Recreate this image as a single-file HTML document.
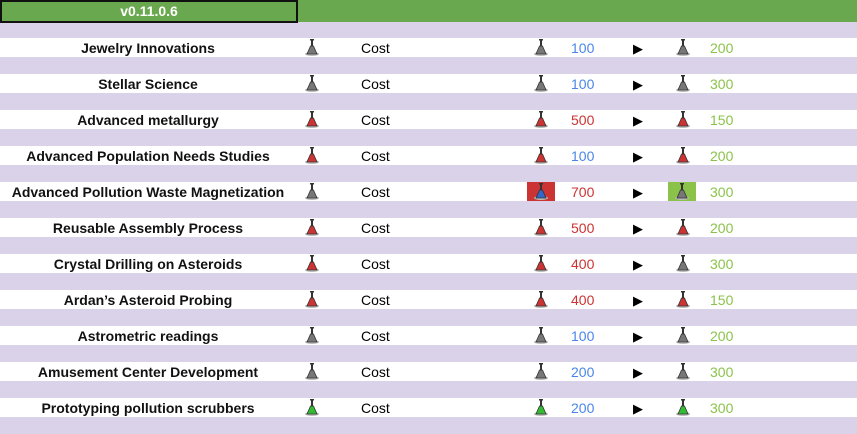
<!DOCTYPE html>
<html><head><style>
body{margin:0;width:857px;height:434px;background:#d9d2e9;font-family:"Liberation Sans",Arial,sans-serif;font-size:14px;position:relative;overflow:hidden}
.hdr{position:absolute;left:0;top:0;width:857px;height:22px;background:#6aa84f}
.ver{position:absolute;left:0;top:0;height:19px;border:2px solid #111;color:#fff;font-weight:bold;text-align:center;line-height:19px;font-size:14px;box-sizing:content-box;width:294px}
.row{position:absolute;left:0;width:857px;height:19px;background:#fff;line-height:21px}
.row span{position:absolute;top:0}
.nm{left:0;width:296px;text-align:center;font-weight:bold;color:#111}
.cost{left:361px}
.n1{left:571px}
.ar{left:633px;font-size:13px}
.n2{left:710px;color:#8bc34a}
.f{position:absolute;top:0;width:18px;height:19px}
.b{color:#4a86e8}.r{color:#cc3333}.g{color:#8bc34a}
</style></head><body>
<div class="hdr"></div><div class="ver">v0.11.0.6</div>
<div id="c"></div>
<script>
var rows=[["Jewelry Innovations","#777","#777","100","b","#777","200",0],
["Stellar Science","#777","#777","100","b","#777","300",0],
["Advanced metallurgy","#c33","#c33","500","r","#c33","150",0],
["Advanced Population Needs Studies","#c33","#c33","100","b","#c33","200",0],
["Advanced Pollution Waste Magnetization","#777","#36c","700","r","#777","300",1],
["Reusable Assembly Process","#c33","#c33","500","r","#c33","200",0],
["Crystal Drilling on Asteroids","#c33","#c33","400","r","#777","300",0],
["Ardan’s Asteroid Probing","#c33","#c33","400","r","#c33","150",0],
["Astrometric readings","#777","#777","100","b","#777","200",0],
["Amusement Center Development","#777","#777","200","b","#777","300",0],
["Prototyping pollution scrubbers","#3b3","#3b3","200","b","#3b3","300",0]];
function fl(x,c,bg){return '<div class="f" style="left:'+x+'px;'+(bg?'background:'+bg+';width:28px;':'')+'"><svg width="'+(bg?28:18)+'" height="19" viewBox="'+(bg?'-5 0 28 19':'0 0 18 19')+'"><ellipse cx="9" cy="16" rx="7" ry="2" fill="#bbb"/><rect x="8" y="2" width="2" height="7" fill="#333"/><path d="M7.5 8 L10.5 8 L14 16 L4 16 Z" fill="'+c+'" stroke="#333" stroke-width="0.8"/><rect x="7" y="1" width="4" height="1.5" fill="#333"/></svg></div>';}
var h='';
rows.forEach(function(r,i){var t=38+36*i;
h+='<div class="row" style="top:'+t+'px"><span class="nm">'+r[0]+'</span>'+fl(303,r[1])+'<span class="cost">Cost</span>'+(r[7]?fl(527,r[2],'#cc3333'):fl(532,r[2]))+'<span class="n1 '+r[4]+'">'+r[3]+'</span><span class="ar">▶</span>'+(r[7]?fl(668,r[5],'#8bc34a'):fl(674,r[5]))+'<span class="n2">'+r[6]+'</span></div>';});
document.getElementById('c').innerHTML=h;
</script>
</body></html>
